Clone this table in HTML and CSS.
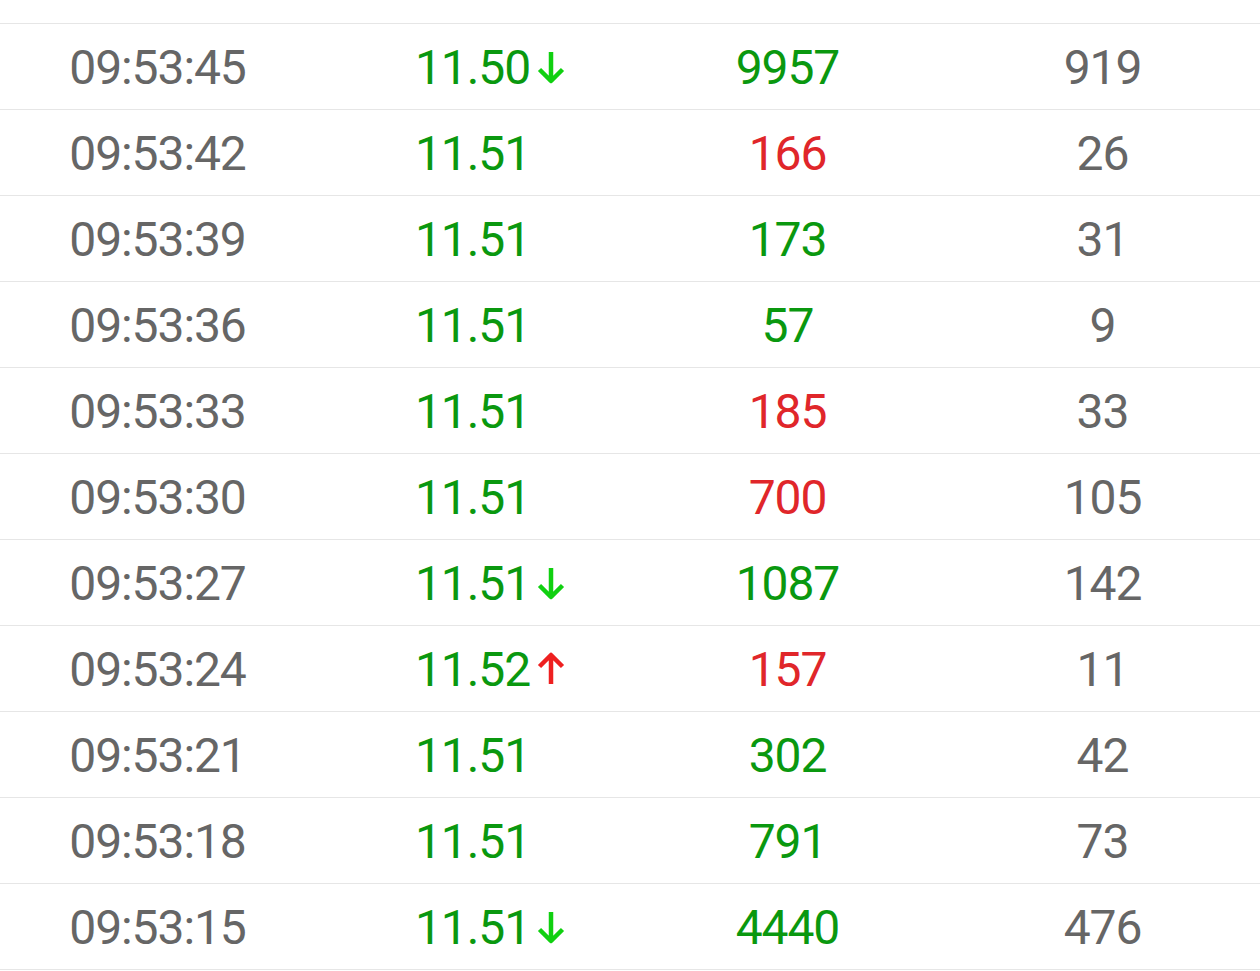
FILE: index.html
```html
<!DOCTYPE html>
<html>
<head>
<meta charset="utf-8">
<link rel="stylesheet" href="styles.css">
</head>
<body>
<div class="list">
  <div class="row"><span class="c time">09:53:45</span><span class="c price"><span class="num">11.50<svg class="arrow down" viewBox="0 0 28 34"><path d="M14 2V31M2.5 19.5L14 31L25.5 19.5"/></svg></span></span><span class="c vol green">9957</span><span class="c cnt">919</span></div>
  <div class="row"><span class="c time">09:53:42</span><span class="c price"><span class="num">11.51</span></span><span class="c vol red">166</span><span class="c cnt">26</span></div>
  <div class="row"><span class="c time">09:53:39</span><span class="c price"><span class="num">11.51</span></span><span class="c vol green">173</span><span class="c cnt">31</span></div>
  <div class="row"><span class="c time">09:53:36</span><span class="c price"><span class="num">11.51</span></span><span class="c vol green">57</span><span class="c cnt">9</span></div>
  <div class="row"><span class="c time">09:53:33</span><span class="c price"><span class="num">11.51</span></span><span class="c vol red">185</span><span class="c cnt">33</span></div>
  <div class="row"><span class="c time">09:53:30</span><span class="c price"><span class="num">11.51</span></span><span class="c vol red">700</span><span class="c cnt">105</span></div>
  <div class="row"><span class="c time">09:53:27</span><span class="c price"><span class="num">11.51<svg class="arrow down" viewBox="0 0 28 34"><path d="M14 2V31M2.5 19.5L14 31L25.5 19.5"/></svg></span></span><span class="c vol green">1087</span><span class="c cnt">142</span></div>
  <div class="row"><span class="c time">09:53:24</span><span class="c price"><span class="num">11.52<svg class="arrow up" viewBox="0 0 28 34"><path d="M14 32V3M2.5 14.5L14 3L25.5 14.5"/></svg></span></span><span class="c vol red">157</span><span class="c cnt">11</span></div>
  <div class="row"><span class="c time">09:53:21</span><span class="c price"><span class="num">11.51</span></span><span class="c vol green">302</span><span class="c cnt">42</span></div>
  <div class="row"><span class="c time">09:53:18</span><span class="c price"><span class="num">11.51</span></span><span class="c vol green">791</span><span class="c cnt">73</span></div>
  <div class="row last"><span class="c time">09:53:15</span><span class="c price"><span class="num">11.51<svg class="arrow down" viewBox="0 0 28 34"><path d="M14 2V31M2.5 19.5L14 31L25.5 19.5"/></svg></span></span><span class="c vol green">4440</span><span class="c cnt">476</span></div>
</div>
</body>
</html>
```
FILE: styles.css
```css
html, body {
  margin: 0;
  padding: 0;
  background: #ffffff;
}
body {
  font-family: Roboto, "Noto Sans", sans-serif;
}
.list {
  padding-top: 23px;
}
.row {
  display: grid;
  grid-template-columns: repeat(4, 1fr);
  align-items: center;
  height: 85px;
  border-top: 1px solid #e6e6e6;
}
.row.last {
  border-bottom: 1px solid #e6e6e6;
}
.c {
  text-align: center;
  font-size: 48px;
  letter-spacing: -1.1px;
  line-height: 1;
  padding-top: 2px;
  color: #666666;
}
.price {
  color: #0a980f;
}
.num {
  position: relative;
  display: inline-block;
}
.arrow {
  position: absolute;
  left: calc(100% + 7px);
  top: 50%;
  width: 28px;
  height: 34px;
  margin-top: -18px;
  fill: none;
  stroke-width: 4.5;
  stroke-linejoin: round;
}
.arrow.down {
  stroke: #10d010;
}
.arrow.up {
  stroke: #ee2020;
}
.green {
  color: #0a980f;
}
.red {
  color: #e0262a;
}
```
